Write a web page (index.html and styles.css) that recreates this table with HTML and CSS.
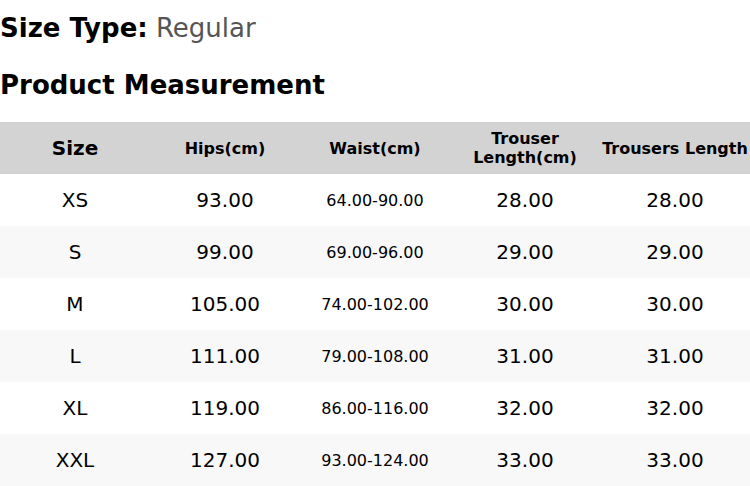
FILE: index.html
```html
<!DOCTYPE html>
<html>
<head>
<meta charset="utf-8">
<link rel="stylesheet" href="styles.css">
</head>
<body>
<div class="page">
  <div class="title"><span class="label">Size Type:</span> <span class="value">Regular</span></div>
  <div class="title heading">Product Measurement</div>
  <table class="size-table">
    <thead>
      <tr>
        <th class="big">Size</th>
        <th>Hips(cm)</th>
        <th>Waist(cm)</th>
        <th>Trouser Length(cm)</th>
        <th>Trousers Length</th>
      </tr>
    </thead>
    <tbody>
      <tr><td>XS</td><td>93.00</td><td class="small">64.00-90.00</td><td>28.00</td><td>28.00</td></tr>
      <tr><td>S</td><td>99.00</td><td class="small">69.00-96.00</td><td>29.00</td><td>29.00</td></tr>
      <tr><td>M</td><td>105.00</td><td class="small">74.00-102.00</td><td>30.00</td><td>30.00</td></tr>
      <tr><td>L</td><td>111.00</td><td class="small">79.00-108.00</td><td>31.00</td><td>31.00</td></tr>
      <tr><td>XL</td><td>119.00</td><td class="small">86.00-116.00</td><td>32.00</td><td>32.00</td></tr>
      <tr><td>XXL</td><td>127.00</td><td class="small">93.00-124.00</td><td>33.00</td><td>33.00</td></tr>
    </tbody>
  </table>
</div>
</body>
</html>
```
FILE: styles.css
```css
html, body {
  margin: 0;
  padding: 0;
  background: #fff;
}
body {
  font-family: "DejaVu Sans", sans-serif;
  color: #000;
}
.page {
  padding-top: 13px;
  display: flex;
  flex-direction: column;
}
.title {
  font-size: 26px;
  line-height: 30px;
  white-space: nowrap;
}
.label {
  font-weight: bold;
}
.value {
  color: #555;
}
.heading {
  font-weight: bold;
  margin-top: 27px;
}
.size-table {
  margin-top: 22px;
  width: 750px;
  border-collapse: collapse;
  table-layout: fixed;
}
.size-table th,
.size-table td {
  width: 150px;
  height: 52px;
  padding: 0;
  text-align: center;
  vertical-align: middle;
  box-sizing: border-box;
}
.size-table th {
  background: #d3d3d3;
  font-size: 16px;
  font-weight: bold;
  line-height: 19px;
}
.size-table th.big {
  font-size: 20px;
}
.size-table td {
  font-size: 20px;
}
.size-table td.small {
  font-size: 16px;
}
.size-table tbody tr:nth-child(even) td {
  background: #f8f8f8;
}
```
